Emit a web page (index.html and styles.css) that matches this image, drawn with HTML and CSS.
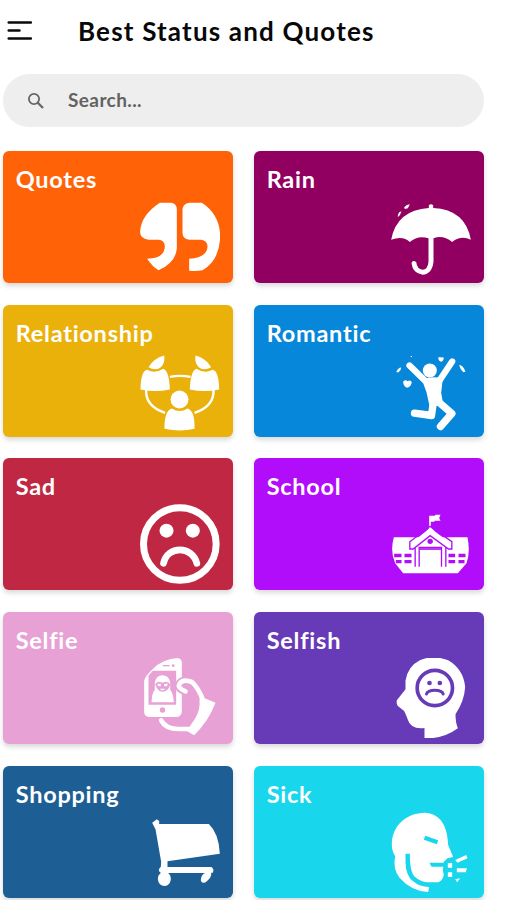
FILE: index.html
```html
<!DOCTYPE html>
<html lang="en">
<head>
<meta charset="utf-8">
<title>Best Status and Quotes</title>
<link rel="stylesheet" href="styles.css">
</head>
<body>
<header class="bar">
  <svg class="menu" viewBox="0 0 26 22" fill="none" stroke="#0a0a0a" stroke-width="2.7" stroke-linecap="round"><path d="M1.8 2.5H23.8M1.8 10.5H12.4M1.8 18.5H23.8"/></svg>
  <h1 class="title">Best Status and Quotes</h1>
</header>
<div class="search">
  <svg class="glass" viewBox="0 0 18 18" fill="none" stroke="#666"><circle cx="7" cy="7" r="5.1" stroke-width="1.8"/><path d="M10.8 10.8L16 16" stroke-width="2.3"/></svg>
  <span class="hint">Search...</span>
</div>
<main class="grid">
  <section class="card quotes"><h2 class="name">Quotes</h2>
    <svg class="icon" viewBox="418.5 156 240 240"><path d="M478 173H510Q528 174 529 193V310Q526 353 474 376Q455 364 440 341Q493 340 493 304Q492 285 474 284H444Q417 280 419 258Q422 210 478 173ZM566 173H604Q659 209 659 276Q657 346 606 376Q586 380 566 377V341Q621 338 621 304Q620 286 602 284H566Q547 282 546 264V193Q547 176 566 173Z"/></svg></section>
  <section class="card rain"><h2 class="name">Rain</h2>
    <svg class="icon" viewBox="421.5 156 240 240"><path d="M535 189V181Q541 174 548 181V189Q645 194 661 284Q632 270 605 291Q577 268 549 280V350Q545 387 516 389Q487 386 483 355Q486 343 497 351Q500 373 516 374Q532 373 534 350V280Q502 270 478 291Q458 271 422 284Q439 195 535 189ZM461 187L469 180L478 178L472 190L463 192ZM442 211L446 202L453 199L448 211L442 216Z"/></svg></section>
  <section class="card relationship"><h2 class="name">Relationship</h2>
    <svg class="icon" viewBox="28.5 16.5 240 240"><path d="M118 94Q148 88 180 94M47 132C45 164 64 189 104 202M249 132C251 164 232 189 192 202" fill="none" stroke="#fff" stroke-width="7"/><path d="M54 65Q69 39 101 30Q104 47 96 59Q88 71 75 71Q63 71 54 65ZM30 132Q31 76 50 73Q74 86 98 70Q116 76 118 132Q74 141 30 132ZM242 65Q227 39 195 30Q192 47 200 59Q208 71 221 71Q233 71 242 65ZM266 132Q265 76 246 73Q222 86 198 70Q180 76 178 132Q222 141 266 132Z"/><circle cx="147" cy="162" r="27"/><path d="M102 250Q101 196 124 189Q148 204 171 189Q194 196 192 250Q148 260 102 250Z"/></svg></section>
  <section class="card romantic"><h2 class="name">Romantic</h2>
    <svg class="icon" viewBox="31.5 16.5 240 240"><circle cx="148" cy="75" r="21"/><path d="M87 60L133 105M215 48L177 105" stroke="#fff" stroke-width="19" stroke-linecap="round"/><path d="M124 102Q155 91 187 98L182 142L188 176L148 186L138 140Z"/><path d="M158 174L153 210L102 203M177 172L214 204L180 243" fill="none" stroke="#fff" stroke-width="22" stroke-linecap="round" stroke-linejoin="round"/><path d="M68 108Q75 101 81 107Q91 102 94 111Q90 125 79 127Q68 121 68 108ZM173 37Q178 32 182 36Q189 33 190 39Q188 47 182 49Q174 47 173 37ZM47 80Q50 69 60 65Q65 70 54 80ZM236 58Q248 60 255 79L249 80Q239 73 236 58ZM89 34L94 31L95 35Z"/></svg></section>
  <section class="card sad"><h2 class="name">Sad</h2>
    <svg class="icon" viewBox="28.5 28 240 240"><circle cx="148" cy="148" r="109" fill="none" stroke="#fff" stroke-width="21"/><circle cx="108" cy="108" r="21"/><circle cx="187" cy="108" r="21"/><path d="M99 206C111 152 185 152 199 206" fill="none" stroke="#fff" stroke-width="20" stroke-linecap="round"/></svg></section>
  <section class="card school"><h2 class="name">School</h2>
    <svg class="icon" viewBox="31.5 -2 240 240"><path d="M40 98H118L150 67L181 98H261Q270 142 258 176L232 206H68L44 176Q28 140 40 98Z"/><path d="M146 33H163L165 30H180L176 40L180 48H163L161 51H151V73H146Z"/><g fill="none" stroke="#b10dfb" stroke-width="4"><path d="M88 111L149 65L214 111V133H204L149 93L98 133H88ZM104 128V186M116 186V128H183V186M196 128V186"/><path d="M116 133H183" stroke-width="5"/></g><path fill="#fff" d="M92 114L149 71L210 114V125L149 84L92 125Z"/><g fill="#b10dfb"><circle cx="149" cy="110" r="8"/><path d="M41 147H63V158H41ZM72 147H93V158H72ZM46 166H63V176H46ZM72 166H93V176H72ZM204 147H224V158H204ZM234 147H255V158H234ZM204 166H224V176H204ZM234 166H252V176H234Z"/></g></svg></section>
  <section class="card selfie"><h2 class="name">Selfie</h2>
    <svg class="icon" viewBox="28.5 24 240 240"><path d="M68 56Q93 29 140 24Q154 25 154 39V184Q153 200 139 201H56Q41 199 41 185V94Q42 79 68 56Z"/><g fill="#e7a1d5"><path d="M67 62H137V164H54V77Z"/><circle cx="96" cy="180" r="8"/><path d="M97 45H117V49H97Z"/><circle cx="128" cy="47" r="4"/></g><path d="M63 157Q64 130 73 119V96Q78 77 95 76Q115 77 119 96V119Q129 131 130 157Z"/><path fill="#e7a1d5" d="M74 103Q79 91 96 98Q112 91 119 103Q116 118 105 123Q96 128 86 122Q78 116 74 103Z"/><path fill="#fff" d="M80 101H91V109H83ZM101 101H112L109 109H101ZM88 116H104L99 121H92Z"/><path d="M165 124Q138 113 148 100Q158 86 184 96Q199 108 215 143" fill="none" stroke="#e7a1d5" stroke-width="25"/><path d="M165 124Q138 113 148 100Q158 86 184 96Q199 108 215 143" fill="none" stroke="#fff" stroke-width="14" stroke-linecap="round"/><path d="M92 211Q105 237 145 237H184" fill="none" stroke="#fff" stroke-width="14" stroke-linecap="round"/><path d="M208 139L255 158Q236 210 191 256L170 244Q180 224 193 207Q210 180 207 151Z"/></svg></section>
  <section class="card selfish"><h2 class="name">Selfish</h2>
    <svg class="icon" viewBox="31.5 24 240 240"><path d="M75 118V92Q82 49 118 31Q157 13 203 31Q248 57 254 110Q252 151 225 193Q225 219 232 235Q189 267 132 265V234Q91 239 82 209Q75 191 71 183L52 168Q47 162 49 151Z"/><circle cx="163" cy="114" r="53" fill="#fff" stroke="#673ab7" stroke-width="11"/><g fill="#673ab7"><circle cx="147" cy="99" r="7"/><circle cx="178" cy="99" r="7"/></g><path d="M138 132Q142 121 163 121Q184 121 188 132" fill="none" stroke="#673ab7" stroke-width="9" stroke-linecap="round"/></svg></section>
  <section class="card shopping"><h2 class="name">Shopping</h2>
    <svg class="icon" viewBox="28.5 35 240 240"><path d="M65 67L79 57L86 62V71H235Q265 99 268 160L111 183V200H243Q252 207 247 217H242Q245 228 229 243Q217 253 211 241Q211 223 224 218H113Q121 224 121 237Q119 256 102 257Q84 256 82 237Q82 224 91 218Q79 209 91 199L92 184L75 87Z"/></svg></section>
  <section class="card sick"><h2 class="name">Sick</h2>
    <svg class="icon" viewBox="31.5 35 240 240"><path d="M34 128C37 73 79 38 133 37C177 39 201 73 203 134L218 170L201 174L190 184L187 210L190 224Q186 241 173 246H143Q120 245 103 229Q88 216 88 160H75V185Q76 230 100 244Q116 258 146 260L143 275Q92 272 57 232Q36 207 44 168Q33 152 34 128Z"/><g fill="#18d6ec"><path d="M134 106L173 120L169 132L130 118ZM147 187H194V199H153Z"/></g><path d="M224 179L257 164L261 174L231 187ZM202 188H215V202H202ZM202 216H215V230H202ZM229 204H259L256 216H229ZM224 237L239 234L230 246Z"/></svg></section>
</main>
</body>
</html>
```

FILE: styles.css
```css
* { box-sizing: border-box; }
body {
  margin: 0;
  width: 506px;
  height: 900px;
  overflow: hidden;
  background: #fff;
  font-family: Lato, "Noto Sans", sans-serif;
}
.bar {
  display: flex;
  align-items: center;
  height: 62px;
  padding-left: 7px;
}
.menu { width: 26px; height: 22px; }
.title {
  margin: 0 0 1px 45px;
  font-size: 26px;
  line-height: 32px;
  font-weight: 700;
  letter-spacing: 1.18px;
  color: #080808;
  white-space: nowrap;
}
.search {
  display: flex;
  align-items: center;
  width: 481px;
  height: 53px;
  margin: 12px 0 24px 3px;
  padding-left: 24px;
  border-radius: 27px;
  background: #eee;
}
.glass { width: 18px; height: 18px; }
.hint {
  margin: 0 0 2px 23px;
  font-size: 19px;
  font-weight: 700;
  letter-spacing: 0.4px;
  color: #626262;
}
.grid {
  display: grid;
  grid-template-columns: 230px 230px;
  grid-auto-rows: 132px;
  gap: 21.7px 21px;
  padding-left: 2.7px;
}
.card {
  display: flex;
  flex-direction: column;
  justify-content: space-between;
  padding: 13px 13px 6px;
  border-radius: 6px;
  box-shadow: 0 3px 5px rgba(0, 0, 0, 0.15);
  color: #fff;
}
.name {
  margin: 0;
  font-size: 23.5px;
  line-height: 30px;
  font-weight: 700;
  letter-spacing: 0.75px;
}
.icon {
  align-self: flex-end;
  width: 80px;
  height: 80px;
  fill: #fff;
}
.quotes { background: #ff6207; }
.rain { background: #910061; }
.relationship { background: #eab10b; }
.romantic { background: #0787d9; }
.sad { background: #c02742; }
.school { background: #b10dfb; }
.selfie { background: #e7a1d5; }
.selfish { background: #673ab7; }
.shopping { background: #1d5e94; }
.sick { background: #18d6ec; }
```
